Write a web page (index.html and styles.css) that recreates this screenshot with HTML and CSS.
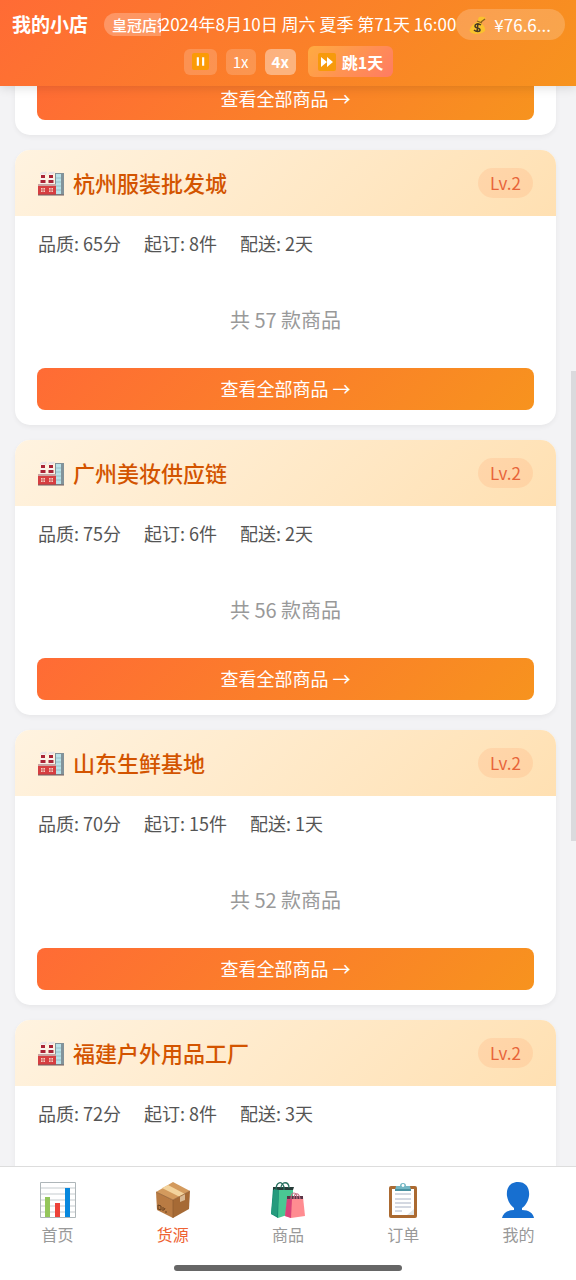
FILE: index.html
```html
<!DOCTYPE html>
<html lang="zh-CN">
<head>
<meta charset="utf-8">
<meta name="viewport" content="width=device-width, initial-scale=1">
<title>我的小店 - 货源</title>
<link rel="stylesheet" href="styles.css">
</head>
<body>
<svg class="defs" aria-hidden="true">
  <symbol id="factory" viewBox="0 0 26 26">
    <path d="M2 4q1-3 4-2 2-1 3 0L8 5H3zM10 4q1-3 4-2 2-1 3 0l-2 3h-4z" fill="#e6e3e2"/>
    <path d="M3 4h4l1 11H2zM11 4h4l1 11h-6z" fill="#f6f2f1"/>
    <path d="M3 5h4v3H3zM11 5h4v3h-4zM2.500 10h5v3h-5zM10.500 10h5v3h-5z" fill="#a92335"/>
    <path d="M17 3h9v22h-9z" fill="#82939a"/>
    <path d="M18 4h5v20h-5z" fill="#b9e2e9"/>
    <path d="M18 8h5M18 12h5M18 16h5M18 20h5" stroke="#8fb5bc" stroke-width=".8"/>
    <path d="M0 15h18v10H0z" fill="#d63e41"/>
    <path d="M0 14h18v2H0z" fill="#c9a5a3"/>
    <path d="M3 18h4v4H3zM11 18h4v4h-4z" fill="#f5c8bd"/>
    <path d="M5 18v4M3 20h4M13 18v4M11 20h4" stroke="#c84d4c" stroke-width=".8"/>
    <path d="M0 25h26" stroke="#755f61"/>
  </symbol>
  <symbol id="chart" viewBox="0 0 36 36">
    <path d="M0 0h36v36H0z" fill="#fff"/>
    <path d="M0 6h36M0 12h36M0 18h36M0 24h36M0 30h36" stroke="#c5cbce"/>
    <path d="M.5.5h35v35H.5z" fill="none" stroke="#aeb6b9"/>
    <path d="M5 15h5v20H5z" fill="#94c65b"/><path d="M15 21h5v14h-5z" fill="#ed4239"/><path d="M25 6h5v29h-5z" fill="#0788de"/>
  </symbol>
  <symbol id="box" viewBox="0 0 36 36">
    <path d="M1 10 18 0l17 9-17 9z" fill="#d39a5d"/>
    <path d="m1 10 17 8v18L2 28z" fill="#b97b43"/>
    <path d="m35 9-17 9v18l16-9z" fill="#a66a35"/>
    <path d="m7 6 6-3 17 9-5 3z" fill="#f3d39d"/>
    <path d="m25 15 5-3v6l-5 2z" fill="#d9b993"/>
    <path d="m1 10 17 8 17-9M18 18v18" fill="none" stroke="#8d592e" stroke-width=".7"/>
    <path d="m3 23 3 1v4l-3-1zM8 25v4M10 26l-1 2M11 29v2" fill="none" stroke="#67401f"/>
  </symbol>
  <symbol id="bags" viewBox="0 0 36 36">
    <path d="M7 6 2 31l6 5 6-2 9-2V5z" fill="#4ac793"/>
    <path d="M3 6h6L8 36l-7-4z" fill="#168b72"/>
    <path d="M3 5h21l-1 3H3z" fill="#263c38"/>
    <path d="m4 7 5 1-2 26-6-2z" fill="#259b7d"/>
    <path d="M6 8C6 0 12-2 14 5v3M11 6c0-7 8-7 8 0" fill="none" stroke="#28705f" stroke-width="1.3"/>
    <path d="M18 15h15l2 19-14 2-6-2z" fill="#ff8c91"/>
    <path d="m17 16 5 1-1 19-6-2z" fill="#d9437a"/>
    <path d="M17 14h16v3H17z" fill="#593446"/>
    <path d="M21 17c0-8 6-8 6 0M24 17c0-7 5-7 6 0" fill="none" stroke="#c47387" stroke-width="1.2"/>
  </symbol>
  <symbol id="clipboard" viewBox="0 0 36 36">
    <rect x="4" y="4" width="28" height="32" rx="2" fill="#ab6a31"/>
    <path d="M7 7h22v26H7z" fill="#fff"/>
    <path d="m22 33 7-6v6z" fill="#e1e6e8"/>
    <path d="M10 12h16M10 17h16M10 21h16M10 25h16M10 29h7" stroke="#a9b2c4"/>
    <path d="M11 4h4a3 3 0 0 1 6 0h4l1 4H10z" fill="#73b6c3"/>
    <path d="M10 7h16v2H10z" fill="#4b92a1"/><circle cx="18" cy="3.5" r="1.4" fill="#fff"/>
  </symbol>
  <symbol id="person" viewBox="0 0 36 36">
    <path d="M18 0c8 0 12 6 11 14-1 6-4 10-7 12v2c7 0 11 3 12 8H2c1-5 5-8 12-8v-2c-3-2-6-6-7-12C6 6 10 0 18 0z" fill="#176fd0"/>
  </symbol>
  <symbol id="money" viewBox="0 0 18 18">
    <path d="M10 1q4-1 7 1l-5 5q5 4 4 8-3 3-9 3-8-1-6-5 2-5 7-7z" fill="#fac22e"/>
    <path d="m8 5 5 2M12 6l4-3" stroke="#8c611e" stroke-width="1.3"/>
    <path d="M12 9c-3-2-6-1-6 1 0 3 5 1 5 4 0 2-4 2-6 0M9 7l-1 9" fill="none" stroke="#493a24" stroke-width="1.5"/>
  </symbol>
</svg>

<header class="topbar">
  <div class="status">
    <div class="shop"><h1>我的小店</h1><span class="rank">皇冠店铺</span></div>
    <time class="date" datetime="2024-08-10T16:00">2024年8月10日 周六 夏季 第71天 16:00</time>
    <div class="balance"><svg aria-hidden="true"><use href="#money"/></svg><span>¥76.6...</span></div>
  </div>
  <div class="speed">
    <button class="pace pause" type="button" aria-label="暂停"><svg viewBox="0 0 16 16" aria-hidden="true"><rect width="16" height="16" rx="2" fill="#fb9b06"/><path d="M5.500 4v8M10.500 4v8" stroke="#fff" stroke-width="2"/></svg></button>
    <button class="pace" type="button">1x</button>
    <button class="pace active" type="button">4x</button>
    <button class="jump" type="button"><svg viewBox="0 0 18 18" aria-hidden="true"><rect width="18" height="18" rx="2" fill="#f79a0b"/><path d="m3 4 6 5-6 5zM9 4l6 5-6 5z" fill="#fff"/></svg>跳1天</button>
  </div>
</header>

<main class="content">
  <article class="card clipped">
    <div class="body"><button class="view" type="button">查看全部商品 →</button></div>
  </article>
  <article class="card">
    <div class="head"><svg aria-hidden="true"><use href="#factory"/></svg><h2>杭州服装批发城</h2><span class="level">Lv.2</span></div>
    <div class="body">
      <div class="facts"><span>品质: 65分</span><span>起订: 8件</span><span>配送: 2天</span></div>
      <p class="count">共 57 款商品</p>
      <button class="view" type="button">查看全部商品 →</button>
    </div>
  </article>
  <article class="card">
    <div class="head"><svg aria-hidden="true"><use href="#factory"/></svg><h2>广州美妆供应链</h2><span class="level">Lv.2</span></div>
    <div class="body">
      <div class="facts"><span>品质: 75分</span><span>起订: 6件</span><span>配送: 2天</span></div>
      <p class="count">共 56 款商品</p>
      <button class="view" type="button">查看全部商品 →</button>
    </div>
  </article>
  <article class="card">
    <div class="head"><svg aria-hidden="true"><use href="#factory"/></svg><h2>山东生鲜基地</h2><span class="level">Lv.2</span></div>
    <div class="body">
      <div class="facts"><span>品质: 70分</span><span>起订: 15件</span><span>配送: 1天</span></div>
      <p class="count">共 52 款商品</p>
      <button class="view" type="button">查看全部商品 →</button>
    </div>
  </article>
  <article class="card last">
    <div class="head"><svg aria-hidden="true"><use href="#factory"/></svg><h2>福建户外用品工厂</h2><span class="level">Lv.2</span></div>
    <div class="body">
      <div class="facts"><span>品质: 72分</span><span>起订: 8件</span><span>配送: 3天</span></div>
    </div>
  </article>
  <div class="thumb"></div>
</main>

<footer class="bottom">
  <nav class="tabs">
    <a href="#home"><svg aria-hidden="true"><use href="#chart"/></svg>首页</a>
    <a href="#supply" class="current" aria-current="page"><svg aria-hidden="true"><use href="#box"/></svg>货源</a>
    <a href="#goods"><svg aria-hidden="true"><use href="#bags"/></svg>商品</a>
    <a href="#orders"><svg aria-hidden="true"><use href="#clipboard"/></svg>订单</a>
    <a href="#me"><svg aria-hidden="true"><use href="#person"/></svg>我的</a>
  </nav>
  <div class="handle"></div>
</footer>
</body>
</html>
```
FILE: styles.css
```css
* { box-sizing: border-box; }
body {
  margin: 0;
  height: 100vh;
  display: flex;
  flex-direction: column;
  overflow: hidden;
  background: #f3f3f5;
  color: #555;
  font-family: "Noto Sans CJK SC", sans-serif;
}
h1, h2, p { margin: 0; }
button { border: 0; padding: 0; font: inherit; color: #fff; cursor: pointer; }
svg { display: block; flex: none; }
.defs { position: absolute; width: 0; height: 0; }

.topbar {
  position: relative;
  z-index: 2;
  flex: none;
  display: flex;
  flex-direction: column;
  gap: 6px;
  padding: 9px 11px 9px 12px;
  color: #fff;
  background: linear-gradient(135deg, #ff6b35, #f7931e);
  box-shadow: 0 2px 10px rgba(0, 0, 0, .12);
}
.status { display: flex; align-items: center; height: 31px; }
.shop { flex: 1 1 0; min-width: 0; display: flex; align-items: center; gap: 16px; overflow: hidden; white-space: nowrap; }
.shop h1 { padding-bottom: 2px; font-size: 19px; line-height: 28px; font-weight: 700; }
.rank { flex: none; padding: 0 8px; border-radius: 12px; font-size: 15px; line-height: 23px; font-weight: 500; background: rgba(255, 255, 255, .25); }
.date { flex: none; padding-bottom: 2px; font-size: 17px; white-space: nowrap; }
.balance { flex: none; display: flex; align-items: center; gap: 7px; height: 31px; padding: 0 14px 0 13px; border-radius: 16px; font-size: 17px; background: rgba(255, 255, 255, .2); }
.balance svg { width: 18px; height: 18px; }
.speed { display: flex; justify-content: center; align-items: center; gap: 9px; height: 31px; }
.pace { height: 26px; padding: 0 7px; border-radius: 6px; font-size: 15px; line-height: 26px; background: rgba(255, 255, 255, .18); }
.pause { padding: 0 8px; }
.pause svg { width: 17px; height: 17px; }
.pace.active { font-weight: 700; background: rgba(255, 255, 255, .4); }
.jump { display: flex; align-items: center; gap: 6px; height: 31px; margin-left: 3px; padding: 0 10px; border-radius: 6px; font-size: 16px; font-weight: 700; background: linear-gradient(135deg, #ffab40, #ff7b63); }
.jump svg { width: 18px; height: 18px; }

.content {
  position: relative;
  flex: 1;
  min-height: 0;
  overflow: hidden;
  display: flex;
  flex-direction: column;
  gap: 15px;
  padding: 0 20px 0 15px;
}
.card { flex: none; overflow: hidden; border-radius: 15px; background: #fff; box-shadow: 0 2px 5px rgba(0, 0, 0, .05); }
.clipped { margin-top: -22px; }
.last { min-height: 275px; }
.head { display: flex; align-items: center; gap: 9px; height: 66px; padding: 0 23px; background: linear-gradient(135deg, #fff3e0, #ffe0b2); }
.head svg { width: 26px; height: 26px; }
.head h2 { flex: 1; padding-bottom: 2px; font-size: 22px; line-height: 32px; font-weight: 500; color: #d35400; }
.level { padding: 0 12px; border-radius: 15px; font-size: 17px; line-height: 30px; color: #e8653a; background: rgba(255, 140, 80, .16); }
.body { display: flex; flex-direction: column; padding: 14px 22px 15px; }
.facts { display: flex; gap: 23px; padding-left: 1px; font-size: 18px; line-height: 26px; }
.count { padding: 50px 0 34px; text-align: center; font-size: 20px; line-height: 28px; color: #999; }
.view { height: 42px; padding-bottom: 2px; border-radius: 8px; font-size: 18px; background: linear-gradient(135deg, #ff6b35, #f7931e); }
.thumb { position: absolute; right: 0; top: 285px; width: 5px; height: 470px; background: #dadadd; }

.bottom { flex: none; background: #fff; border-top: 1px solid #ddd; }
.tabs { display: flex; }
.tabs a { flex: 1; display: flex; flex-direction: column; align-items: center; gap: 4px; padding-top: 15px; font-size: 16px; line-height: 24px; color: #999; text-decoration: none; }
.tabs svg { width: 36px; height: 36px; }
.tabs .current { color: #ee6233; }
.handle { width: 228px; height: 6px; margin: 19px auto 9px; border-radius: 3px; background: #666; }
```
